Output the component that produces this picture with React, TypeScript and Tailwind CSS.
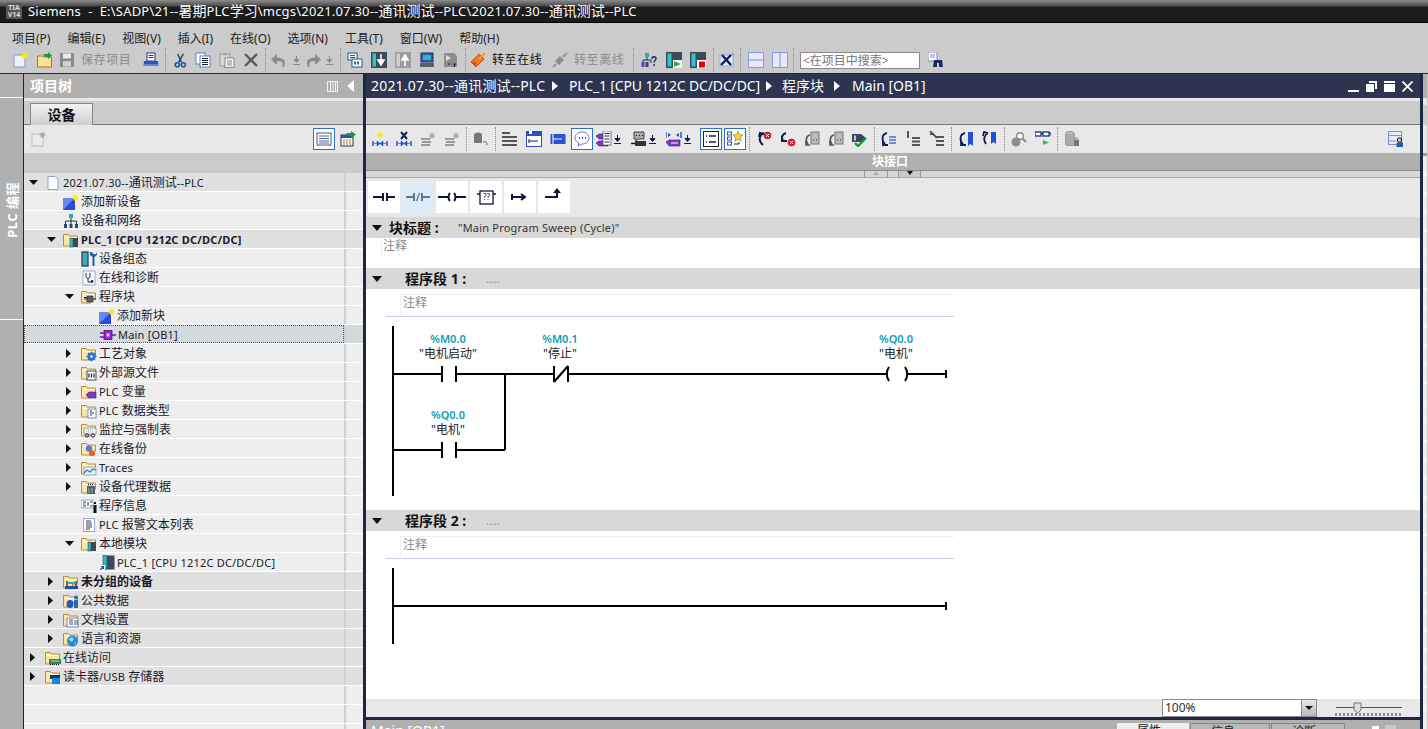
import React from "react";
import type { ReactNode } from "react";

const star = (x: number, y: number, c = "#ffe800") => (
  <path
    transform={`translate(${x} ${y})`}
    d="M3.5 0l.8 2.2L6.5 1.3 5.3 3.5 7 4.3l-2 .6.3 2.1-1.8-1.3L1.7 7 2 4.9 0 4.3l1.7-.8L.5 1.3l2.2.9z"
    fill={c}
  />
);

const folder = (inner: ReactNode) => (
  <>
    <path d="M.5 14V2.5h5l1 1.5h8v6h-5v4z" fill="#fbe6a8" stroke="#b98f34" />
    <path d="M2 5h11v1H2z" fill="#fff" />
    {inner}
  </>
);

const module_ = (
  <>
    <rect x="7" y="6" width="3" height="9" fill="#35b5c0" stroke="#24505a" strokeWidth=".6" />
    <rect x="10" y="6" width="5" height="9" fill="#3c4a58" />
  </>
);

const icons: Record<string, ReactNode> = {
  doc: <path d="M3 1.5h7l3 3v10H3z" fill="#fff" stroke="#8aa0d8" />,
  addDev: (
    <>
      <rect x="0" y="4" width="12" height="12" fill="#2c48d8" />
      <path d="M0 4h12L0 16z" fill="#6a86f0" />
      {star(9, 0)}
    </>
  ),
  network: (
    <>
      <rect x="6" y="1" width="4" height="4" fill="#35a8b8" />
      <path d="M8 5v3M2.5 11V8h11v3M8 8v3" stroke="#234" fill="none" />
      <rect x="1" y="11" width="3" height="4" fill="#244a70" />
      <rect x="6.5" y="11" width="3" height="4" fill="#244a70" />
      <rect x="12" y="11" width="3" height="4" fill="#244a70" />
    </>
  ),
  fDevice: folder(module_),
  config: (
    <>
      <rect x="1" y="1" width="6" height="14" fill="#38b0bc" stroke="#3a4a5c" strokeWidth="1.4" />
      <path d="M9 1v3l2.5 2V15h2V6L16 4V1l-1 2h-3l-1-2z" fill="#1f5ea8" />
    </>
  ),
  stetho: (
    <>
      <rect x="2" y="1" width="12" height="14" fill="#fff" stroke="#98a8d8" />
      <path d="M5 3v4l2 2 2-2V3M7 9v3h3" fill="none" stroke="#1a2a50" />
      <circle cx="11" cy="11.5" r="1.4" fill="#1a2a50" />
    </>
  ),
  fBlock: folder(
    <>
      <rect x="6" y="7" width="6" height="6" fill="#55606c" stroke="#222" strokeWidth=".6" />
      <path d="M3 10h3M12 10h3M3 8.5h3" stroke="#222" strokeWidth="1.2" />
    </>
  ),
  ob: (
    <>
      <rect x="4" y="3.5" width="8" height="9" fill="#9a20d0" stroke="#3a0a70" strokeWidth=".7" />
      <path d="M0 6h4M0 10h4M12 8h4" stroke="#7a10b0" strokeWidth="1.6" />
      <rect x="6.5" y="6.4" width="3" height="3.2" fill="#e8c0f8" />
    </>
  ),
  fTech: folder(
    <>
      <circle cx="10.5" cy="10.5" r="4" fill="#2a70d8" />
      <path d="M10.5 5.5v10M5.5 10.5h10M7 7l7 7M14 7l-7 7" stroke="#2a70d8" strokeWidth="1.4" />
      <circle cx="10.5" cy="10.5" r="1.3" fill="#fff" />
    </>
  ),
  fExt: folder(
    <>
      <rect x="6" y="6" width="9" height="9" fill="#fff" stroke="#3a4a5c" />
      <path d="M8 8.5v4M10.5 8.5v4M13 8.5v4" stroke="#223" strokeWidth="1.2" />
    </>
  ),
  fTag: folder(<path d="M5 11l3-3h7v6H8z" fill="#7a3cc0" stroke="#3a1a70" strokeWidth=".6" />),
  fType: folder(
    <>
      <rect x="7" y="6" width="8" height="9" fill="#fff" stroke="#7f8fb0" />
      <path d="M9 8h2M9 10h4M9 12h2" stroke="#234" />
    </>
  ),
  fWatch: folder(
    <>
      <rect x="3" y="6" width="12" height="6" fill="#fff" stroke="#8a9ab8" />
      <path d="M5 8h8M5 10h8" stroke="#8a9ab8" strokeDasharray="1 1" />
      <circle cx="6" cy="13.5" r="1.6" fill="none" stroke="#223" />
      <circle cx="12" cy="13.5" r="1.6" fill="none" stroke="#223" />
    </>
  ),
  fBackup: folder(
    <>
      <ellipse cx="8" cy="7.5" rx="3.2" ry="3.2" fill="#5a78d8" />
      <rect x="8" y="10" width="6" height="5" rx="2" fill="#e8601c" />
    </>
  ),
  fTrace: folder(
    <>
      <rect x="3" y="7" width="12" height="8" fill="#e4f0fa" stroke="#5a8ab8" strokeWidth=".6" />
      <path d="M3 13l3-3 3 2 3-3 3 1" fill="none" stroke="#2b7bc8" strokeWidth="1.2" />
    </>
  ),
  fProxy: folder(
    <>
      <rect x="6" y="7" width="8" height="8" fill="#55606c" />
      <path d="M7 5.5h6" stroke="#223" strokeWidth="1.4" strokeDasharray="1 1" />
      <path d="M8 9v5M11 9v5" stroke="#9ab" />
    </>
  ),
  info: (
    <>
      <rect x="0" y="2" width="12" height="8" fill="#fff" stroke="#8aa0c8" />
      <path d="M2 4h3M2 6h2M2 8h3M7 4v4M9 4h2M9 8h2" stroke="#123" strokeWidth=".9" />
      <rect x="13" y="4" width="2" height="2" fill="#111" />
      <rect x="12.5" y="7" width="3" height="8" fill="#111" />
    </>
  ),
  text: (
    <>
      <rect x="2.5" y="1.5" width="11" height="13" fill="#fff" stroke="#98a8d8" />
      <path d="M5 4h5M5 6h6M5 8h6M5 10h6M5 12h4" stroke="#345" />
    </>
  ),
  fLocal: folder(module_),
  plc: (
    <>
      <rect x="4" y="0.5" width="4" height="14" fill="#35b5c0" stroke="#24505a" strokeWidth=".6" />
      <rect x="8" y="0.5" width="7.5" height="14" fill="#3c4a58" />
      <rect x="0" y="10" width="6" height="6" fill="#fff" />
      <path d="M1 15l3-3M2 11.5h2.5V14" stroke="#1a50c0" fill="none" strokeWidth="1.2" />
    </>
  ),
  fGroup: folder(
    <>
      <path d="M4 7v5M13 7v5" stroke="#235" strokeWidth="1.4" />
      <rect x="2" y="12" width="13" height="3" fill="#1f50a8" />
      <path d="M4 9h9" stroke="#35a8b8" strokeWidth="2" />
    </>
  ),
  fCommon: folder(
    <>
      <ellipse cx="7" cy="11" rx="3.4" ry="4" fill="#2b50c8" />
      <circle cx="13" cy="4.5" r="2" fill="#1f70a8" />
      <rect x="11" y="7" width="4" height="8" fill="#1f70a8" />
    </>
  ),
  fDocset: folder(
    <>
      <rect x="4" y="6" width="11" height="9" fill="#fff" stroke="#7088c0" />
      <path d="M6 8h4M6 10h4M6 12h4M12 8v5M14 8v5" stroke="#345" strokeWidth=".9" />
    </>
  ),
  fLang: folder(
    <>
      <circle cx="9.5" cy="10" r="5.5" fill="#2a88d8" />
      <path d="M6 8l3-2 2 2-2 3-2-1zM11 12l2-1v2z" fill="#9ad8f0" />
    </>
  ),
  fOnline: folder(
    <>
      <rect x="4" y="9" width="12" height="5" fill="#2e8a50" />
      <path d="M5 14.5h10" stroke="#111" strokeDasharray="1 1" />
      <path d="M6 11h8" stroke="#a8e0b8" />
    </>
  ),
  fCard: folder(
    <>
      <rect x="5" y="6" width="10" height="4" fill="#234" />
      <rect x="7" y="9" width="8" height="6" fill="#1a88d8" />
    </>
  ),

  // main toolbar
  tNew: (
    <>
      <path d="M1 3h11v12H1z" fill="#eef2fc" stroke="#8098d0" />
      {star(8, 0)}
    </>
  ),
  tOpen: (
    <>
      <path d="M.5 15V4h5l1 1h8v10z" fill="#fbe098" stroke="#a87820" />
      <path d="M6 2h5V0l4 3.5L11 7V5H8z" fill="#1c9a38" />
    </>
  ),
  tSave: (
    <>
      <rect x="1" y="1" width="14" height="14" fill="#8a8a8a" />
      <rect x="4" y="1.5" width="8" height="5" fill="#e8e8e8" />
      <rect x="4" y="9" width="8" height="5.5" fill="#d0d0d0" />
    </>
  ),
  tPrint: (
    <>
      <rect x="4" y="1" width="8" height="8" fill="#fff" stroke="#223a90" />
      <path d="M5.5 3.5h5M5.5 5.5h5" stroke="#223a90" />
      <path d="M1 9h14l.5 5H.5z" fill="#2c50d0" />
      <path d="M1 13h14" stroke="#9ab0f0" />
    </>
  ),
  tCut: (
    <>
      <path d="M5 1l4 9M11 1L6 10" stroke="#24446a" strokeWidth="1.5" />
      <circle cx="4.5" cy="12.5" r="2.2" fill="none" stroke="#1a50b8" strokeWidth="1.6" />
      <circle cx="11" cy="12.5" r="2.2" fill="none" stroke="#1a50b8" strokeWidth="1.6" />
    </>
  ),
  tCopy: (
    <>
      <rect x="1" y="1" width="9" height="11" fill="#fff" stroke="#6080c8" />
      <rect x="5" y="4" width="10" height="11" fill="#fff" stroke="#6080c8" />
      <path d="M7 6.5h6M7 8.5h6M7 10.5h6M7 12.5h6" stroke="#123" />
    </>
  ),
  tPaste: (
    <>
      <rect x="1" y="2" width="10" height="12" fill="#d8d8d8" stroke="#999" />
      <rect x="4" y="1" width="4" height="2.5" fill="#aaa" />
      <rect x="6" y="6" width="9" height="9.5" fill="#f4f4f4" stroke="#888" />
      <path d="M8 9h5M8 11h5M8 13h5" stroke="#888" />
    </>
  ),
  tDel: <path d="M2 2l12 12M14 2L2 14" stroke="#55595e" strokeWidth="2.4" />,
  tUndo: <path d="M13 15c3-6-1-10-7-9V2L0 7.500 6 13V9.500c4-1 7 1 5 5.500z" fill="#8c8c8c" />,
  tRedo: <path d="M3 15C0 9 4 5 10 6V2l6 5.500L10 13V9.500c-4-1-7 1-5 5.500z" fill="#8c8c8c" />,
  tCompile: (
    <>
      <rect x="1" y="1" width="9" height="7" fill="#fff" stroke="#2050a8" />
      <path d="M3 3.5h5M3 5.5h5" stroke="#2050a8" />
      <rect x="5" y="7" width="10" height="8" fill="#fff" stroke="#2050a8" />
      <path d="M8 9.5v3M11 9.5v3" stroke="#123" strokeWidth="1.4" />
    </>
  ),
  tDown: (
    <>
      <rect x="0" y="0" width="16" height="16" fill="#3c4a58" />
      <rect x="1.5" y="1.5" width="3.5" height="13" fill="#35c0cc" />
      <path d="M10 2v7M7 8h6l-3 5z" stroke="#fff" fill="#fff" strokeWidth="1.6" />
    </>
  ),
  tUp: (
    <>
      <rect x="0" y="0" width="16" height="16" fill="#9c9c9c" />
      <rect x="1.5" y="1.5" width="3.5" height="13" fill="#d0d0d0" />
      <path d="M10 14V7M7 8h6l-3-5z" stroke="#fff" fill="#fff" strokeWidth="1.6" />
    </>
  ),
  tPc: (
    <>
      <rect x="2" y="1" width="12" height="9" fill="#3a5ab0" stroke="#20325c" />
      <rect x="4" y="3" width="8" height="5" fill="#30b0d0" />
      <rect x="1" y="11" width="14" height="4" fill="#56606c" />
    </>
  ),
  tRt: (
    <>
      <path d="M1 1h10l3 3v11H1z" fill="#8c8c8c" />
      <path d="M3 3l5 3-5 3z" fill="#ddd" />
      <path d="M5 12h2M10 12h3M11.5 12v3" stroke="#222" strokeWidth="1.2" />
    </>
  ),
  tGo: (
    <>
      <path d="M1 10l8-8 5 5-8 8z" fill="#f07820" stroke="#b83808" strokeWidth=".8" />
      <path d="M9 7l6-6" stroke="#f0a020" strokeWidth="2" />
      <path d="M1 10h5v5" fill="#d84a10" />
    </>
  ),
  tOff: (
    <>
      <path d="M3 9l5-5 4 4-5 5z" fill="#8c8c8c" />
      <path d="M11 5l4-4M1 15l3-3" stroke="#999" strokeWidth="2" />
    </>
  ),
  tHelp: (
    <>
      <rect x="4" y="1" width="4" height="4" fill="#35a8b8" />
      <path d="M6 5v3M2 11V8h8v3" stroke="#234" fill="none" />
      <rect x="0.5" y="10" width="3" height="5" fill="#6a38c0" />
      <rect x="4.5" y="10" width="3" height="5" fill="#234a70" />
      <path d="M11 7c0-3 4-3 4-.5 0 2-2 2-2 4M13 12v2" stroke="#1a3060" fill="none" strokeWidth="1.4" />
    </>
  ),
  tStart: (
    <>
      <rect x="0" y="0" width="16" height="16" fill="#3c4a58" />
      <rect x="1.5" y="1.5" width="4" height="13" fill="#35c0cc" />
      <rect x="7" y="8" width="9" height="8" fill="#fff" />
      <path d="M8 9l7 3-7 3z" fill="#20b040" />
    </>
  ),
  tStop: (
    <>
      <rect x="0" y="0" width="16" height="16" fill="#3c4a58" />
      <rect x="1.5" y="1.5" width="4" height="13" fill="#35c0cc" />
      <rect x="7" y="8" width="9" height="8" fill="#fff" />
      <rect x="9" y="9.5" width="6" height="6" fill="#e80000" />
    </>
  ),
  tCross: (
    <>
      <rect x="1" y="3" width="13" height="11" fill="#e8eefc" stroke="#98a8e0" />
      <path d="M2 13L12 3M3 3l9 10" stroke="#101c50" strokeWidth="2.4" />
      <path d="M13 1l2 2" stroke="#5878d8" />
    </>
  ),
  tSplitH: (
    <>
      <rect x="0.5" y="0.5" width="15" height="15" fill="#e4eafc" stroke="#8898e0" />
      <path d="M1 8h14" stroke="#7888d8" />
    </>
  ),
  tSplitV: (
    <>
      <rect x="0.5" y="0.5" width="15" height="15" fill="#e4eafc" stroke="#8898e0" />
      <path d="M8 1v14" stroke="#7888d8" />
    </>
  ),
  tBino: (
    <>
      <rect x="0" y="0" width="9" height="9" fill="#fff" stroke="#8090b0" />
      <path d="M2 3h5M2 5h5" stroke="#8090b0" />
      <path d="M6 8h3v7H5zM11 8h3l1 7h-4z" fill="#1a2860" />
      <rect x="8" y="8" width="4" height="3" fill="#1a2860" />
    </>
  ),
  // tree toolbar
  tTreeNew: (
    <>
      <path d="M1 3h11v12H1z" fill="#ececec" stroke="#bbb" />
      {star(8, 0, "#aaa")}
    </>
  ),
  tTreeList: (
    <>
      <rect x="1" y="2" width="14" height="12" fill="#fff" stroke="#445a88" />
      <path d="M3 5h10M3 7.5h10M3 10h10M3 12h10" stroke="#556a98" />
    </>
  ),
  tTreeExp: (
    <>
      <rect x="1" y="4" width="12" height="11" fill="#fff" stroke="#234" />
      <path d="M1 4h12v3H1z" fill="#2050c0" />
      <path d="M3 9h8M3 11h8M3 13h8" stroke="#c86010" strokeDasharray="2 1" />
      <path d="M6 2h5V0l5 3.5L11 7V5H8z" fill="#1c9a38" />
    </>
  ),
  // editor toolbar
  eAddNet: (
    <>
      <path d="M1 10v5M15 10v5" stroke="#1a50c0" strokeWidth="1.4" />
      <path d="M1 12.5h4M11 12.5h4M5 10l3 2.5-3 2.5zM11 10l-3 2.5 3 2.5z" fill="#1a50c0" stroke="#1a50c0" strokeWidth=".6" />
      {star(4.5, 0)}
    </>
  ),
  eDelNet: (
    <>
      <path d="M1 10v5M15 10v5" stroke="#1a50c0" strokeWidth="1.4" />
      <path d="M1 12.5h4M11 12.5h4M5 10l3 2.5-3 2.5zM11 10l-3 2.5 3 2.5z" fill="#1a50c0" stroke="#1a50c0" strokeWidth=".6" />
      <path d="M5 1l6 7M11 1L5 8" stroke="#101c50" strokeWidth="2" />
    </>
  ),
  eGrayStar: (
    <>
      <path d="M1 8h9M2 11h9M1 14h9" stroke="#9a9a9a" strokeWidth="2" />
      {star(8.5, 1, "#aaa")}
    </>
  ),
  eDb: (
    <>
      <ellipse cx="5" cy="4" rx="4" ry="2.5" fill="#777" />
      <rect x="1" y="4" width="8" height="8" fill="#777" />
      <path d="M10 11c2-1 4 0 4 3" fill="none" stroke="#888" strokeWidth="1.4" />
    </>
  ),
  eLines: <path d="M0 2h8M0 6h15M0 10h15M0 14h15" stroke="#555" strokeWidth="2" />,
  eBoxA: (
    <>
      <rect x="0.5" y="0.5" width="15" height="15" fill="#fff" stroke="#2850c8" />
      <rect x="1" y="1" width="14" height="4" fill="#2850c8" />
      <rect x="3" y="0" width="3" height="3" fill="#fff" />
      <path d="M3 8v4M3 10h9" stroke="#123" />
    </>
  ),
  eBoxB: (
    <>
      <rect x="0.5" y="3" width="15" height="10" fill="#2850d8" />
      <path d="M3 3v10" stroke="#fff" />
      <path d="M3 8h9" stroke="#fff" />
    </>
  ),
  eBubble: (
    <>
      <path d="M8 1c4 0 7 2.4 7 6s-3 6-7 6l-4 2 1-3C3 11 1 9.500 1 7c0-3.600 3-6 7-6z" fill="#fff" stroke="#6a6ad8" />
      <path d="M5 7h1M8 7h1M11 7h1" stroke="#223" strokeWidth="1.4" />
    </>
  ),
  eTag: (
    <>
      <path d="M0 5l3-2h9v5H3zM0 12l3-2h9v5H3z" fill="#7a3cc0" stroke="#3a1a70" strokeWidth=".6" />
      <rect x="7" y="0" width="8" height="14" fill="#fff" stroke="#3a1a70" strokeWidth=".6" />
      <path d="M8.500 2.500h5M8.500 5h5M8.500 8h5M8.500 11h5" stroke="#223" />
    </>
  ),
  eSpeech: (
    <>
      <path d="M3 1h10v7H7l-2 2V8H3z" fill="#aaa" stroke="#444" />
      <path d="M5 4.500h1M8 4.500h1M11 4.500h1" stroke="#111" />
      <rect x="4" y="10" width="11" height="5" fill="#333" />
      <path d="M0 12.500h4" stroke="#111" strokeWidth="1.400" />
    </>
  ),
  eMixTag: (
    <>
      <path d="M0 1v6M15 1v6" stroke="#1a50c0" strokeWidth="1.400" />
      <path d="M2 2l3 2-3 2zM13 2l-3 2 3 2z" fill="#1a50c0" />
      <path d="M0 11l3-2h11v6H3z" fill="#7a3cc0" stroke="#3a1a70" strokeWidth=".6" />
      <path d="M5 12h7" stroke="#fff" />
    </>
  ),
  eBoxList: (
    <>
      <rect x="0.5" y="0.5" width="15" height="15" fill="#fff" stroke="#223" />
      <path d="M3 5h1M6 5h7M3 11h1M6 11h7" stroke="#123" strokeWidth="1.400" />
    </>
  ),
  eStarList: (
    <>
      <rect x="0.5" y="1" width="4" height="3" fill="#fff" stroke="#2850c8" />
      <rect x="0.5" y="6" width="4" height="3" fill="#fff" stroke="#2850c8" />
      <rect x="0.5" y="11" width="4" height="3" fill="#fff" stroke="#2850c8" />
      <path d="M11 0l1.500 3.600 3.500.4-2.700 2.400.8 3.600-3.100-1.900L8 10.500l.8-3.600L6 4l3.500-.4z" fill="#f8d840" stroke="#8a7010" strokeWidth=".6" />
      <path d="M7 13h5v-2" fill="none" stroke="#123" />
    </>
  ),
  eErrPrev: (
    <>
      <path d="M8 2C3 4 2 10 7 14M3 6l1-4 4 1" fill="none" stroke="#101c50" strokeWidth="2" />
      <circle cx="11.500" cy="4.500" r="3.800" fill="#d02030" />
      <path d="M10 3l3 3M13 3l-3 3" stroke="#fff" />
    </>
  ),
  eErrNext: (
    <>
      <path d="M6 2C2 3 1 7 3 9.500M2 5v5h5" fill="none" stroke="#101c50" strokeWidth="2" />
      <circle cx="11.500" cy="11.500" r="3.800" fill="#d02030" />
      <path d="M10 10l3 3M13 10l-3 3" stroke="#fff" />
    </>
  ),
  eGrayJump: (
    <>
      <rect x="7" y="1" width="8" height="12" fill="#bbb" stroke="#777" />
      <path d="M9 9h1M12 9h1" stroke="#222" strokeWidth="1.200" />
      <path d="M6 4C2 5 1 10 4 13M2 9v5h4" fill="none" stroke="#555" strokeWidth="1.600" />
    </>
  ),
  eCheck: (
    <>
      <path d="M0 3h9l5 4-5 4H0z" fill="#3a4858" />
      <path d="M3 4.500v5" stroke="#fff" strokeWidth="1.400" />
      <path d="M3 12l3 3 8-8" fill="none" stroke="#1c9a38" strokeWidth="2.400" />
    </>
  ),
  eArrList: (
    <>
      <path d="M6 2C1 3 0 9 4 13M2 9v5h5" fill="none" stroke="#101c50" strokeWidth="1.800" />
      <path d="M8 6h7M8 9h7M8 12h7" stroke="#4a72d8" strokeWidth="1.600" />
    </>
  ),
  eBarList: <path d="M3 0v7M7 7h8M7 10.500h8M7 14h8" stroke="#555" strokeWidth="2" />,
  eSlashList: <path d="M1 0l7 7M7 6h8M7 10h8M7 14h8M1 3h4" stroke="#555" strokeWidth="1.800" />,
  eBmA: (
    <>
      <path d="M7 2C2 3 1 9 5 13M3 9v5h5" fill="none" stroke="#101c50" strokeWidth="1.800" />
      <path d="M10 1h5v14l-2.500-2-2.500 2z" fill="#2050d8" />
    </>
  ),
  eBmB: (
    <>
      <path d="M6 2C2 4 1 9 4 13M1 5l1-4 4 1" fill="none" stroke="#101c50" strokeWidth="1.800" />
      <path d="M9 1h5v12l-2.500-2L9 13z" fill="#2050d8" />
    </>
  ),
  eGlass: (
    <>
      <circle cx="9" cy="5" r="3.300" fill="#fff" stroke="#888" strokeWidth="1.400" />
      <path d="M11.500 7.500L15 11" stroke="#888" strokeWidth="2" />
      <circle cx="5" cy="11" r="4.500" fill="#8c8c8c" />
    </>
  ),
  eSpecs: (
    <>
      <rect x="0" y="1" width="6" height="4" fill="#fff" stroke="#1a2880" strokeWidth="1.300" />
      <rect x="8" y="1" width="6" height="4" fill="#fff" stroke="#1a2880" strokeWidth="1.300" />
      <path d="M6 2.500h2M14 2h2v3" stroke="#1a2880" fill="none" />
      <path d="M8 9l6 2.500L8 14z" fill="#20c060" />
    </>
  ),
  eCyl: (
    <>
      <ellipse cx="6" cy="3" rx="4.500" ry="2.500" fill="#bbb" stroke="#999" />
      <path d="M1.500 3v10c0 2 9 2 9 0V3" fill="#aaa" stroke="#999" />
      <rect x="10" y="9" width="5" height="6" fill="#777" />
      <path d="M11 9c0-3 3-3 3 0" fill="none" stroke="#777" />
    </>
  ),
  eUser: (
    <>
      <rect x="0.5" y="0.5" width="13" height="13" fill="#e8ecfa" stroke="#8090d0" />
      <path d="M1 4.500h12M1 10h7" stroke="#8090d0" />
      <circle cx="11.500" cy="9" r="2.200" fill="#f0c890" stroke="#111" />
      <rect x="8.500" y="11.500" width="6.500" height="4.500" fill="#1a5ea8" />
    </>
  ),
};

const Ico = ({ n, size = 16 }: { n: string; size?: number }) => (
  <svg width={size} height={size} viewBox="0 0 16 16" className="shrink-0">
    {icons[n]}
  </svg>
);

// Latin runs are drawn a bit smaller than the CJK ones, as in the original UI font
const Mixed = ({ text, latin = "text-[11px] tracking-[0.2px]" }: { text: string; latin?: string }) => (
  <>
    {text.split(/([\u4e00-\u9fff：]+)/).map((part, i) =>
      i % 2 === 1 ? <span key={i}>{part}</span> : <span key={i} className={latin}>{part}</span>
    )}
  </>
);

const Slot = ({ n, selected }: { n: string; selected?: boolean }) => (
  <div className="w-6 h-[27px] flex items-center justify-center">
    {selected ? (
      <div className="w-[22px] h-[22px] flex items-center justify-center border border-[#2f6fd0] bg-white">
        <Ico n={n} />
      </div>
    ) : (
      <Ico n={n} />
    )}
  </div>
);

const Sep = () => (
  <div className="w-[5px] flex justify-center">
    <div className="h-[24px] border-l border-dotted border-[#8a8a8a]" />
  </div>
);

const SmallDown = ({ gray }: { gray?: boolean }) => (
  <svg width="9" height="9" viewBox="0 0 9 9" className="shrink-0">
    <path d="M4.500 0v4M2 3.500h5L4.500 6.500z" stroke={gray ? "#8c8c8c" : "#101c50"} fill={gray ? "#8c8c8c" : "#101c50"} />
    <path d="M1 8.500h7" stroke={gray ? "#8c8c8c" : "#101c50"} />
  </svg>
);

const SlotDown = ({ n }: { n: string }) => (
  <div className="w-[35px] h-[27px] flex items-center pl-[2px] gap-[1px]">
    <Ico n={n} />
    <SmallDown />
  </div>
);

const menus = ["项目(P)", "编辑(E)", "视图(V)", "插入(I)", "在线(O)", "选项(N)", "工具(T)", "窗口(W)", "帮助(H)"];

type Row = { label: string; level: number; icon: string; arrow?: "open" | "closed"; dark?: boolean; bold?: boolean };

const tree: Row[] = [
  { label: "2021.07.30--通讯测试--PLC", level: 0, icon: "doc", arrow: "open", dark: true },
  { label: "添加新设备", level: 1, icon: "addDev" },
  { label: "设备和网络", level: 1, icon: "network" },
  { label: "PLC_1 [CPU 1212C DC/DC/DC]", level: 1, icon: "fDevice", arrow: "open", dark: true, bold: true },
  { label: "设备组态", level: 2, icon: "config" },
  { label: "在线和诊断", level: 2, icon: "stetho" },
  { label: "程序块", level: 2, icon: "fBlock", arrow: "open" },
  { label: "添加新块", level: 3, icon: "addDev" },
  { label: "Main [OB1]", level: 3, icon: "ob" },
  { label: "工艺对象", level: 2, icon: "fTech", arrow: "closed" },
  { label: "外部源文件", level: 2, icon: "fExt", arrow: "closed" },
  { label: "PLC 变量", level: 2, icon: "fTag", arrow: "closed" },
  { label: "PLC 数据类型", level: 2, icon: "fType", arrow: "closed" },
  { label: "监控与强制表", level: 2, icon: "fWatch", arrow: "closed" },
  { label: "在线备份", level: 2, icon: "fBackup", arrow: "closed" },
  { label: "Traces", level: 2, icon: "fTrace", arrow: "closed" },
  { label: "设备代理数据", level: 2, icon: "fProxy", arrow: "closed" },
  { label: "程序信息", level: 2, icon: "info" },
  { label: "PLC 报警文本列表", level: 2, icon: "text" },
  { label: "本地模块", level: 2, icon: "fLocal", arrow: "open" },
  { label: "PLC_1 [CPU 1212C DC/DC/DC]", level: 3, icon: "plc" },
  { label: "未分组的设备", level: 1, icon: "fGroup", arrow: "closed", dark: true, bold: true },
  { label: "公共数据", level: 1, icon: "fCommon", arrow: "closed", dark: true },
  { label: "文档设置", level: 1, icon: "fDocset", arrow: "closed", dark: true },
  { label: "语言和资源", level: 1, icon: "fLang", arrow: "closed", dark: true },
  { label: "在线访问", level: 0, icon: "fOnline", arrow: "closed", dark: true },
  { label: "读卡器/USB 存储器", level: 0, icon: "fCard", arrow: "closed", dark: true },
];

const indent = ["pl-[5px]", "pl-[23px]", "pl-[41px]", "pl-[59px]"];

const Arrow = ({ kind }: { kind?: "open" | "closed" }) => (
  <div className="w-4 flex items-center">
    {kind === "open" && (
      <svg width="10" height="6" viewBox="0 0 10 6">
        <path d="M0 0h9L4.500 5z" fill="#111" />
      </svg>
    )}
    {kind === "closed" && (
      <svg width="6" height="10" viewBox="0 0 6 10" className="ml-[1px]">
        <path d="M0 0v9l5-4.500z" fill="#111" />
      </svg>
    )}
  </div>
);

const TreeRow = ({ row }: { row: Row }) => {
  const selected = row.label === "Main [OB1]";
  return (
    <div className={`flex h-[19px] border-b border-white ${row.dark ? "bg-[#e0e0e0]" : selected ? "bg-[#d3d9dd]" : "bg-[#eeeeee]"}`}>
      <div
        className={`flex-1 flex items-center pt-px ${indent[row.level]} ${selected ? "border border-dotted border-[#555]" : ""}`}
      >
        <Arrow kind={row.arrow} />
        <Ico n={row.icon} />
        <span className={`ml-[2px] text-[12px] leading-[18px] whitespace-nowrap text-[#1a1a2a] ${row.bold ? "font-bold" : ""}`}>
          <Mixed text={row.label} />
        </span>
      </div>
      <div className="w-[19px] border-l-2 border-[#d0d0d0]" />
    </div>
  );
};

const Crumb = () => (
  <svg width="6" height="10" viewBox="0 0 6 10" className="shrink-0">
    <path d="M0 0v10l6-5z" fill="#fff" />
  </svg>
);

const FavBtn = ({ active, children }: { active?: boolean; children: ReactNode }) => (
  <div className={`w-8 h-8 flex items-center justify-center ${active ? "bg-[#dcecf5]" : "bg-white"}`}>
    <svg width="28" height="24" viewBox="0 0 28 24" fill="none" stroke={active ? "#5a7a9a" : "#14143c"} strokeWidth="2">
      {children}
    </svg>
  </div>
);

const NetHeader = ({ n }: { n: number }) => (
  <div className="h-[21px] bg-[#d8d8d8] flex items-center pl-[6px]">
    <svg width="10" height="6" viewBox="0 0 10 6" className="shrink-0">
      <path d="M0 0h10L5 6z" fill="#111" />
    </svg>
    <span className="ml-[23px] w-[81px] text-[14px] leading-[20px] font-bold text-[#111] whitespace-pre">程序段 {n} :</span>
    <span className="text-[10px] leading-[20px] text-[#888]">.....</span>
  </div>
);

const Comment = () => (
  <div className="pt-[5px] pl-5 pr-[466px]">
    <div className="h-[22px] pl-[14px]">
      <div className="h-[21px] pl-[2px] border-l border-t border-[#eeeeee] text-[12px] leading-[15px] text-[#8a8a8a]">注释</div>
    </div>
    <div className="h-px bg-[#d0cce8]" />
  </div>
);

const ladderFont = "'Noto Sans','Noto Sans CJK SC',sans-serif";

const Tag = ({ x, y, addr, name }: { x: number; y: number; addr: string; name: string }) => (
  <g textAnchor="middle" fontFamily={ladderFont} fontSize="12">
    <text x={x} y={y} fill="#0aa0b4" fontWeight="600" fontSize="11">
      {addr}
    </text>
    <text x={x} y={y + 15} fill="#222">
      {name}
    </text>
  </g>
);

const Ladder1 = () => (
  <svg width="600" height="193" viewBox="366 317 600 193" className="block">
    <g stroke="#000" strokeWidth="2" fill="none">
      <path d="M393 326v170" />
      <path d="M393 374h49M442 366v16M456 366v16M456 374h98M554 366v16M568 366v16M554 382l14-16M568 374h320" />
      <path d="M889 367c-3 4-3 10 0 14M905 367c3 4 3 10 0 14M908 374h38M946 370v8" />
      <path d="M505 374v76M393 450h49M442 442v16M456 442v16M456 450h49" />
    </g>
    <Tag x={448} y={343} addr="%M0.0" name={'"电机启动"'} />
    <Tag x={560} y={343} addr="%M0.1" name={'"停止"'} />
    <Tag x={896} y={343} addr="%Q0.0" name={'"电机"'} />
    <Tag x={448} y={419} addr="%Q0.0" name={'"电机"'} />
  </svg>
);

const Ladder2 = () => (
  <svg width="600" height="90" viewBox="366 559 600 90" className="block">
    <path d="M393 568v76M393 606h553M946 602v8" stroke="#000" strokeWidth="2" fill="none" />
  </svg>
);

const sideRows = Array.from({ length: 29 }, (_, i) => i);

const EmptyCol = () => <div className="w-[19px] border-l-2 border-[#d0d0d0]" />;

export default function App() {
  return (
    <div className="w-[1428px] h-[729px] overflow-hidden flex flex-col bg-[#cbcbcb] font-['Noto_Sans','Noto_Sans_CJK_SC',sans-serif]">
      {/* title bar */}
      <div className="h-[23px] flex items-center pl-[6px] border-b border-black bg-[linear-gradient(#8c8c8c_0px,#4a4a4a_6px,#1c1c1c_7px)]">
        <div className="w-[16px] h-[16px] bg-[#555] flex flex-col items-center justify-center text-[7px] leading-[7px] font-bold text-[#ddd]">
          <span>TIA</span>
          <span>V14</span>
        </div>
        <span className="ml-[6px] text-[14px] leading-[18px] text-white whitespace-pre">
          <Mixed
            text={"Siemens  -  E:\\SADP\\21--暑期PLC学习\\mcgs\\2021.07.30--通讯测试--PLC\\2021.07.30--通讯测试--PLC"}
            latin="text-[13px] tracking-[0.2px]"
          />
        </span>
      </div>

      {/* menu + main toolbar */}
      <div className="h-[51px] border-b border-[#1e2640] bg-[#cbcbcb]">
        <div className="h-[25px] pl-3 flex items-end gap-[17px] text-[12px] leading-[19px] text-[#222]">
          {menus.map((m) => (
            <span key={m} className="whitespace-nowrap">
              {m}
            </span>
          ))}
        </div>
        <div className="h-6 flex items-center pl-[9px] text-[12px] whitespace-nowrap">
          <Slot n="tNew" />
          <Slot n="tOpen" />
          <div className="w-[20px] flex justify-center"><Ico n="tSave" /></div>
          <span className="ml-[4px] w-[58px] text-[#8c8c8c] tracking-[0.6px]">保存项目</span>
          <Slot n="tPrint" />
          <Sep />
          <div className="w-[21px] ml-[2px] flex justify-center"><Ico n="tCut" size={15} /></div>
          <Slot n="tCopy" />
          <Slot n="tPaste" />
          <Slot n="tDel" />
          <Sep />
          <div className="w-[32px] ml-[1px] flex items-center justify-end gap-[5px]"><Ico n="tUndo" /><SmallDown gray /></div>
          <div className="w-[33px] flex items-center justify-end gap-[4px]"><Ico n="tRedo" /><SmallDown gray /></div>
          <div className="w-[4px]" />
          <Sep />
          <Slot n="tCompile" />
          <Slot n="tDown" />
          <Slot n="tUp" />
          <Slot n="tPc" />
          <Slot n="tRt" />
          <Sep />
          <div className="ml-[2px] w-[22px]"><Ico n="tGo" /></div>
          <span className="w-[60px] tracking-[0.6px] text-[#111]">转至在线</span>
          <div className="w-[22px]"><Ico n="tOff" /></div>
          <span className="w-[57px] tracking-[0.6px] text-[#8c8c8c]">转至离线</span>
          <Sep />
          <div className="ml-[5px] w-[25px]"><Ico n="tHelp" /></div>
          <div className="w-[24px]"><Ico n="tStart" /></div>
          <div className="w-[21px]"><Ico n="tStop" /></div>
          <Sep />
          <div className="ml-[3px] w-[19px]"><Ico n="tCross" /></div>
          <Sep />
          <div className="ml-[5px] w-[24px]"><Ico n="tSplitH" /></div>
          <div className="w-[19px]"><Ico n="tSplitV" /></div>
          <Sep />
          <div className="ml-[4px] w-[120px] h-[17px] bg-white border border-[#8a8a8a] pl-[2px] text-[12px] leading-[15px] text-[#777]">&lt;在项目中搜索&gt;</div>
          <div className="ml-[8px]"><Ico n="tBino" /></div>
        </div>
      </div>

      <div className="flex-1 flex min-h-0">
        {/* portal strip */}
        <div className="w-6 bg-[#b0b0b0] border-r border-[#1e2640] flex flex-col">
          <div className="h-6 border-b border-white" />
          <div className="h-[222px] border-b border-white flex items-start justify-center pt-[84px]">
            <span className="[writing-mode:vertical-rl] [text-orientation:sideways] rotate-180 text-[13px] leading-[16px] font-bold text-white tracking-[0.5px] whitespace-nowrap">
              PLC 编程
            </span>
          </div>
        </div>

        {/* project tree */}
        <div className="w-[339px] flex flex-col bg-[#eeeeee] overflow-hidden">
          <div className="h-6 shrink-0 bg-[#b0b0b0] flex items-center pl-[6px] text-[14px] leading-[20px] font-bold text-white">
            <span className="flex-1">项目树</span>
            <svg width="11" height="11" viewBox="0 0 11 11" className="mr-[9px]">
              <path d="M.5.5h10v10H.5zM3.500 1v9M6 1v9M8.500 1v9" fill="none" stroke="#f4f4f4" />
            </svg>
            <svg width="7" height="12" viewBox="0 0 7 12" className="mr-[9px]">
              <path d="M7 0v12L0 6z" fill="#fff" />
            </svg>
          </div>
          <div className="h-[3px] shrink-0 bg-[#e8e8e8]" />
          <div className="h-6 shrink-0 bg-[#cbcbcb] border-b border-[#7a7a7a] pl-[6px] flex items-end">
            <div className="w-[63px] h-[22px] -mb-px border border-b-0 border-[#8a8a8a] bg-[linear-gradient(#f2f2f2,#cfcfcf)] text-center text-[14px] leading-[21px] font-bold text-[#111]">
              设备
            </div>
          </div>
          <div className="h-[28px] shrink-0 bg-[#e8e8e8] flex items-center pl-[7px] pr-[7px]">
            <Ico n="tTreeNew" />
            <div className="ml-auto w-[22px] h-[22px] border border-[#2f6fd0] bg-white flex items-center justify-center">
              <Ico n="tTreeList" />
            </div>
            <div className="ml-[5px]"><Ico n="tTreeExp" /></div>
          </div>
          <div className="h-5 shrink-0 bg-[#cbcbcb]" />
          {tree.map((row, i) => (
            <TreeRow key={i} row={row} />
          ))}
          <div className="h-[19px] shrink-0 border-b border-white flex"><div className="flex-1" /><EmptyCol /></div>
          <div className="h-[19px] shrink-0 border-b border-white flex"><div className="flex-1" /><EmptyCol /></div>
          <div className="flex-1 flex"><div className="flex-1" /><EmptyCol /></div>
        </div>

        <div className="w-[3px] bg-[#1e2640]" />

        {/* editor */}
        <div className="w-[1054px] flex flex-col">
          <div className="h-6 shrink-0 bg-[#2d3550] flex items-center pl-[5px] text-[14px] leading-[20px] text-white whitespace-nowrap">
            <span className="w-[181px] tracking-[0.2px]">2021.07.30--通讯测试--PLC</span>
            <Crumb />
            <span className="ml-[11px] w-[197px] tracking-[-0.15px]">PLC_1 [CPU 1212C DC/DC/DC]</span>
            <Crumb />
            <span className="ml-[10px] w-[52px]">程序块</span>
            <Crumb />
            <span className="ml-[12px]">Main [OB1]</span>
            <div className="ml-auto mr-[7px] flex items-center gap-[7px]">
              <svg width="11" height="12" viewBox="0 0 11 12"><path d="M0 10h11v2H0z" fill="#fff" /></svg>
              <svg width="11" height="11" viewBox="0 0 11 11"><path d="M3 0h8v8H9V2H3zM0 3h8v8H0z" fill="#fff" /></svg>
              <svg width="11" height="11" viewBox="0 0 11 11"><path d="M0 0h11v2H0zM0 3h11v8H0z" fill="#fff" /></svg>
              <svg width="11" height="11" viewBox="0 0 11 11"><path d="M.5.5l10 10M10.500.5l-10 10" stroke="#fff" strokeWidth="1.800" /></svg>
            </div>
          </div>
          <div className="h-[3px] shrink-0 bg-[#e8e8e8]" />
          <div className="h-6 shrink-0 bg-[#cbcbcb] border-b border-[#7a7a7a]" />
          <div className="h-[28px] shrink-0 bg-[#e8e8e8] flex items-center pl-[2px]">
            <Slot n="eAddNet" />
            <Slot n="eDelNet" />
            <Slot n="eGrayStar" />
            <Slot n="eGrayStar" />
            <Sep />
            <Slot n="eDb" />
            <Sep />
            <Slot n="eLines" />
            <Slot n="eBoxA" />
            <Slot n="eBoxB" />
            <Slot n="eBubble" selected />
            <SlotDown n="eTag" />
            <SlotDown n="eSpeech" />
            <SlotDown n="eMixTag" />
            <Slot n="eBoxList" selected />
            <Slot n="eStarList" selected />
            <Sep />
            <Slot n="eErrPrev" />
            <Slot n="eErrNext" />
            <Slot n="eGrayJump" />
            <Slot n="eGrayJump" />
            <Slot n="eCheck" />
            <Sep />
            <Slot n="eArrList" />
            <Slot n="eBarList" />
            <Slot n="eSlashList" />
            <Sep />
            <Slot n="eBmA" />
            <Slot n="eBmB" />
            <Sep />
            <Slot n="eGlass" />
            <Slot n="eSpecs" />
            <Sep />
            <Slot n="eCyl" />
            <div className="ml-auto mr-4"><Ico n="eUser" /></div>
          </div>
          <div className="h-[18px] shrink-0 bg-[#b0b0b0] border-b border-[#8a8a8a] relative text-center text-[12px] leading-[17px] font-bold text-white">
            <span className="absolute left-[506px] top-0">块接口</span>
          </div>
          <div className="h-[7px] shrink-0 bg-[#d8d8d8] border-b border-[#a8a8a8] flex pl-[498px]">
            <div className="w-6 h-[6px] border-l border-r border-[#999] flex justify-center">
              <svg width="6" height="4" viewBox="0 0 6 4"><path d="M3 0l3 4H0z" fill="#aaa" /></svg>
            </div>
            <div className="w-[11px] h-[6px] border-r border-[#999]" />
            <div className="w-[22px] h-[6px] bg-[#c8c8c8] border-r border-[#999] flex justify-center">
              <svg width="6" height="4" viewBox="0 0 6 4"><path d="M0 0h6L3 4z" fill="#111" /></svg>
            </div>
          </div>
          <div className="h-[39px] shrink-0 bg-[#e8e8e8] pl-[2px] pt-[3px] flex gap-[2px]">
            <FavBtn>
              <path d="M3 12h10M13 8v8M17 8v8M17 12h8" />
            </FavBtn>
            <FavBtn active>
              <path d="M2 12h8M10 8v8M18 8v8M18 12h8" />
              <path d="M12.500 16l3-8" strokeWidth="1.300" />
            </FavBtn>
            <FavBtn>
              <path d="M0 12h11M17 12h11M12 8c-2 2-2 6 0 8M16 8c2 2 2 6 0 8" />
            </FavBtn>
            <FavBtn>
              <rect x="8" y="6" width="13" height="13" strokeWidth="1.300" fill="#fff" />
              <path d="M5 9h3M21 9h3" strokeWidth="1.300" />
              <text x="14.500" y="15" textAnchor="middle" fontSize="8" fontFamily={ladderFont} fill="#14143c" stroke="none">??</text>
            </FavBtn>
            <FavBtn>
              <path d="M6 9v6M6 12h13M15 9l4 3-4 3" />
            </FavBtn>
            <FavBtn>
              <path d="M5 12h12V6" />
              <path d="M13 8l4-5 4 5z" fill="#14143c" stroke="none" />
            </FavBtn>
          </div>

          {/* block title */}
          <div className="h-[21px] shrink-0 bg-[#d8d8d8] flex items-center pl-[6px]">
            <svg width="10" height="6" viewBox="0 0 10 6" className="shrink-0">
              <path d="M0 0h10L5 6z" fill="#111" />
            </svg>
            <span className="ml-[7px] w-[69px] text-[14px] leading-[20px] font-bold text-[#111] whitespace-pre">块标题 :</span>
            <span className="text-[12px] leading-[20px] text-[#333]"><Mixed text={'"Main Program Sweep (Cycle)"'} /></span>
          </div>

          <div className="flex-1 bg-white min-h-0 overflow-hidden">
            <div className="h-[30px] pl-[15px]">
              <div className="h-5 pl-px border-l border-[#eeeeee] text-[12px] leading-[16px] text-[#8a8a8a]">注释</div>
            </div>
            <NetHeader n={1} />
            <Comment />
            <Ladder1 />
            <NetHeader n={2} />
            <Comment />
            <Ladder2 />
          </div>

          <div className="h-[18px] shrink-0 bg-[#e8e8e8] flex pl-[796px]">
            <div className="w-[155px] h-[18px] flex bg-white border border-[#8a8a8a]">
              <span className="flex-1 pl-[2px] text-[12px] leading-[16px] text-[#333]">100%</span>
              <div className="w-[15px] bg-[linear-gradient(#e8e8e8,#b8b8b8)] border-l border-[#8a8a8a] flex items-center justify-center">
                <svg width="8" height="4" viewBox="0 0 8 4"><path d="M0 0h8L4 4z" fill="#111" /></svg>
              </div>
            </div>
            <svg width="70" height="18" viewBox="0 0 70 18" className="ml-[17px]">
              <path d="M2 8.500h66" stroke="#555" />
              <path d="M2 14v3M6 14v3M10 14v3M14 14v3M18 14v3M22 14v3M26 14v3M30 14v3M34 14v3M38 14v3M42 14v3M46 14v3M50 14v3M54 14v3M58 14v3M62 14v3M66 14v3" stroke="#333" />
              <path d="M20 4h7v7l-3.500 3-3.500-3z" fill="#ddd" stroke="#777" />
            </svg>
          </div>
          <div className="h-[3px] shrink-0 bg-[#1e2640]" />
          <div className="h-[9px] shrink-0 bg-[#b0b0b0] relative overflow-hidden">
            <span className="absolute left-[5px] top-[1px] text-[14px] leading-[20px] text-white">Main [OB1]</span>
            <div className="absolute left-[751px] top-[3px] flex gap-[1px] text-[12px] leading-[16px] text-[#222]">
              <div className="w-[72px] h-6 bg-[#eeeeee] pl-5">属性</div>
              <div className="w-[80px] h-6 bg-[#b8b8b8] border border-[#888] pl-5">信息</div>
              <div className="w-[74px] h-6 bg-[#b8b8b8] border border-[#888] pl-5">诊断</div>
            </div>
            <div className="absolute left-[1006px] top-[6px] w-[7px] h-[3px] bg-white" />
            <div className="absolute left-[1019px] top-[5px] w-[11px] h-[4px] bg-[#c8c8c8]" />
          </div>
        </div>

        {/* right rail */}
        <div className="w-[3px] bg-[#1e2640]" />
        <div className="w-1 flex flex-col bg-[#eeeeee] overflow-hidden">
          <div className="h-6 shrink-0 bg-[#b0b0b0]" />
          <div className="h-[7px] shrink-0 bg-[#e8e8e8]" />
          <div className="h-5 shrink-0 bg-[#cbcbcb]" />
          <div className="h-[28px] shrink-0 bg-[#e8e8e8]" />
          <div className="h-[3px] shrink-0 bg-[#9a9a9a]" />
          {sideRows.map((i) => (
            <div key={i} className="h-[19px] shrink-0 border-b border-white bg-[#eeeeee]" />
          ))}
        </div>
      </div>
    </div>
  );
}
